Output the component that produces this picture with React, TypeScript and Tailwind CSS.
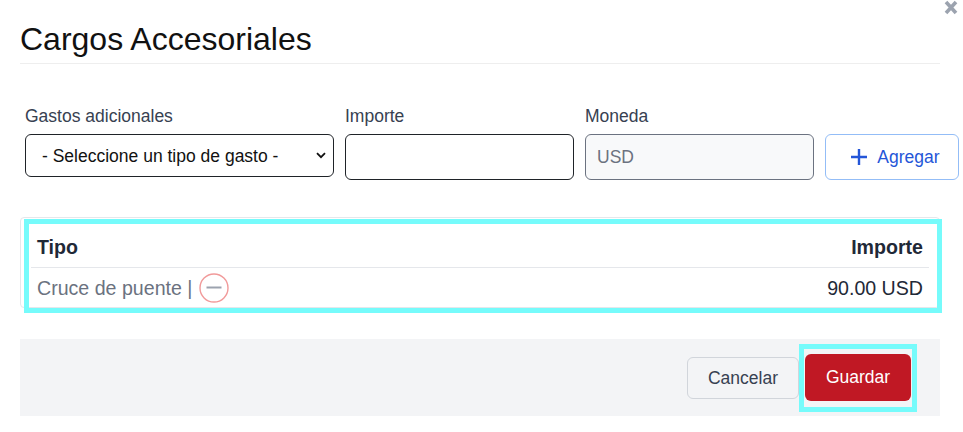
import React from "react";

const font = "font-['Liberation_Sans',Arial,sans-serif]";

function CloseIcon() {
  return (
    <svg width="14" height="15" viewBox="0 0 14 15">
      <path d="M2 2 L12 13 M12 2 L2 13" stroke="#9ca3af" strokeWidth="3.6" strokeLinecap="butt" />
    </svg>
  );
}

function Chevron() {
  return (
    <svg width="10" height="7" viewBox="0 0 10 7">
      <path d="M1 1.2 L5 5.2 L9 1.2" fill="none" stroke="#111" strokeWidth="1.8" />
    </svg>
  );
}

function Plus() {
  return (
    <svg width="18" height="18" viewBox="0 0 18 18">
      <path d="M9 1 V17 M1 9 H17" stroke="#2456d8" strokeWidth="2.4" />
    </svg>
  );
}

function MinusCircle() {
  return (
    <svg width="30" height="30" viewBox="0 0 30 30">
      <circle cx="15" cy="15" r="14" fill="none" stroke="#f19a9a" strokeWidth="1.4" />
      <path d="M7.5 14.5 H22.5" stroke="#9ca3af" strokeWidth="2" />
    </svg>
  );
}

export default function App() {
  return (
    <div className={`relative w-[963px] h-[432px] bg-white overflow-hidden ${font}`}>
      <button className="absolute top-0 left-[944px] w-[14px] h-[15px]">
        <CloseIcon />
      </button>

      <div className="mx-[20px] w-[920px]">
        {/* header */}
        <div className="pt-[21px] pb-[6px] border-b border-[#eeeeee]">
          <h1 className="text-[32px] leading-[36px] text-[#111]">Cargos Accesoriales</h1>
        </div>

        {/* form row */}
        <div className="mt-[42px] ml-[5px] flex items-start gap-[11px] w-[934px] text-[17.5px]">
          <div className="flex flex-col gap-[8px]">
            <label className="leading-[20px] text-[#374151]">Gastos adicionales</label>
            <div className="w-[309px] h-[43px] border border-[#1f2328] rounded-[6px] flex items-center justify-between pl-[16px] pr-[7px]">
              <span className="text-[#111] leading-[20px]">- Seleccione un tipo de gasto -</span>
              <Chevron />
            </div>
          </div>
          <div className="flex flex-col gap-[8px]">
            <label className="leading-[20px] text-[#374151]">Importe</label>
            <input className="w-[229px] h-[46px] border border-[#1f2328] rounded-[6px] px-[11px] outline-none" />
          </div>
          <div className="flex flex-col gap-[8px]">
            <label className="leading-[20px] text-[#374151]">Moneda</label>
            <div className="w-[229px] h-[46px] border border-[#6b7280] bg-[#f8f9fa] rounded-[6px] px-[11px] flex items-center text-[#6b7280]">
              USD
            </div>
          </div>
          <button className="mt-[28px] w-[134px] h-[46px] border border-[#93bdf7] rounded-[6px] flex items-center justify-center gap-[9px] pl-[6px] text-[#2456d8]">
            <Plus />
            <span className="leading-[20px]">Agregar</span>
          </button>
        </div>

        {/* table */}
        <div className="mt-[37px] h-[91px] border border-[#e5e7eb] rounded-[4px] pl-[3px] pt-[1px]">
          <div className="w-[918px] h-[94px] border-[5px] border-[#76fbfb] pl-[2px] pr-[8px] text-[19.6px]">
            <div className="flex justify-between px-[6px] pt-[11px] pb-[8px] leading-[24px] font-bold text-[#1f2937] border-b border-[#e5e7eb]">
              <span>Tipo</span>
              <span>Importe</span>
            </div>
            <div className="h-[40px] flex items-center justify-between px-[6px] leading-[24px]">
              <div className="flex items-center gap-[7px] text-[#6b7280]">
                <span>Cruce de puente |</span>
                <MinusCircle />
              </div>
              <span className="text-[#1f2937]">90.00 USD</span>
            </div>
          </div>
        </div>

        {/* footer */}
        <div className="mt-[31px] h-[77px] bg-[#f3f4f6] flex items-center justify-end pr-[23px] text-[17.5px]">
          <button className="w-[112px] h-[42px] border border-[#d1d5db] rounded-[6px] bg-[#f3f4f6] text-[#374151] leading-[20px]">
            Cancelar
          </button>
          <div className="border-[5px] border-[#76fbfb] px-[1px] pt-[5px] pb-[6px]">
            <button className="w-[106px] h-[47px] rounded-[6px] bg-[#c01824] text-white leading-[20px]">
              Guardar
            </button>
          </div>
        </div>
      </div>
    </div>
  );
}
